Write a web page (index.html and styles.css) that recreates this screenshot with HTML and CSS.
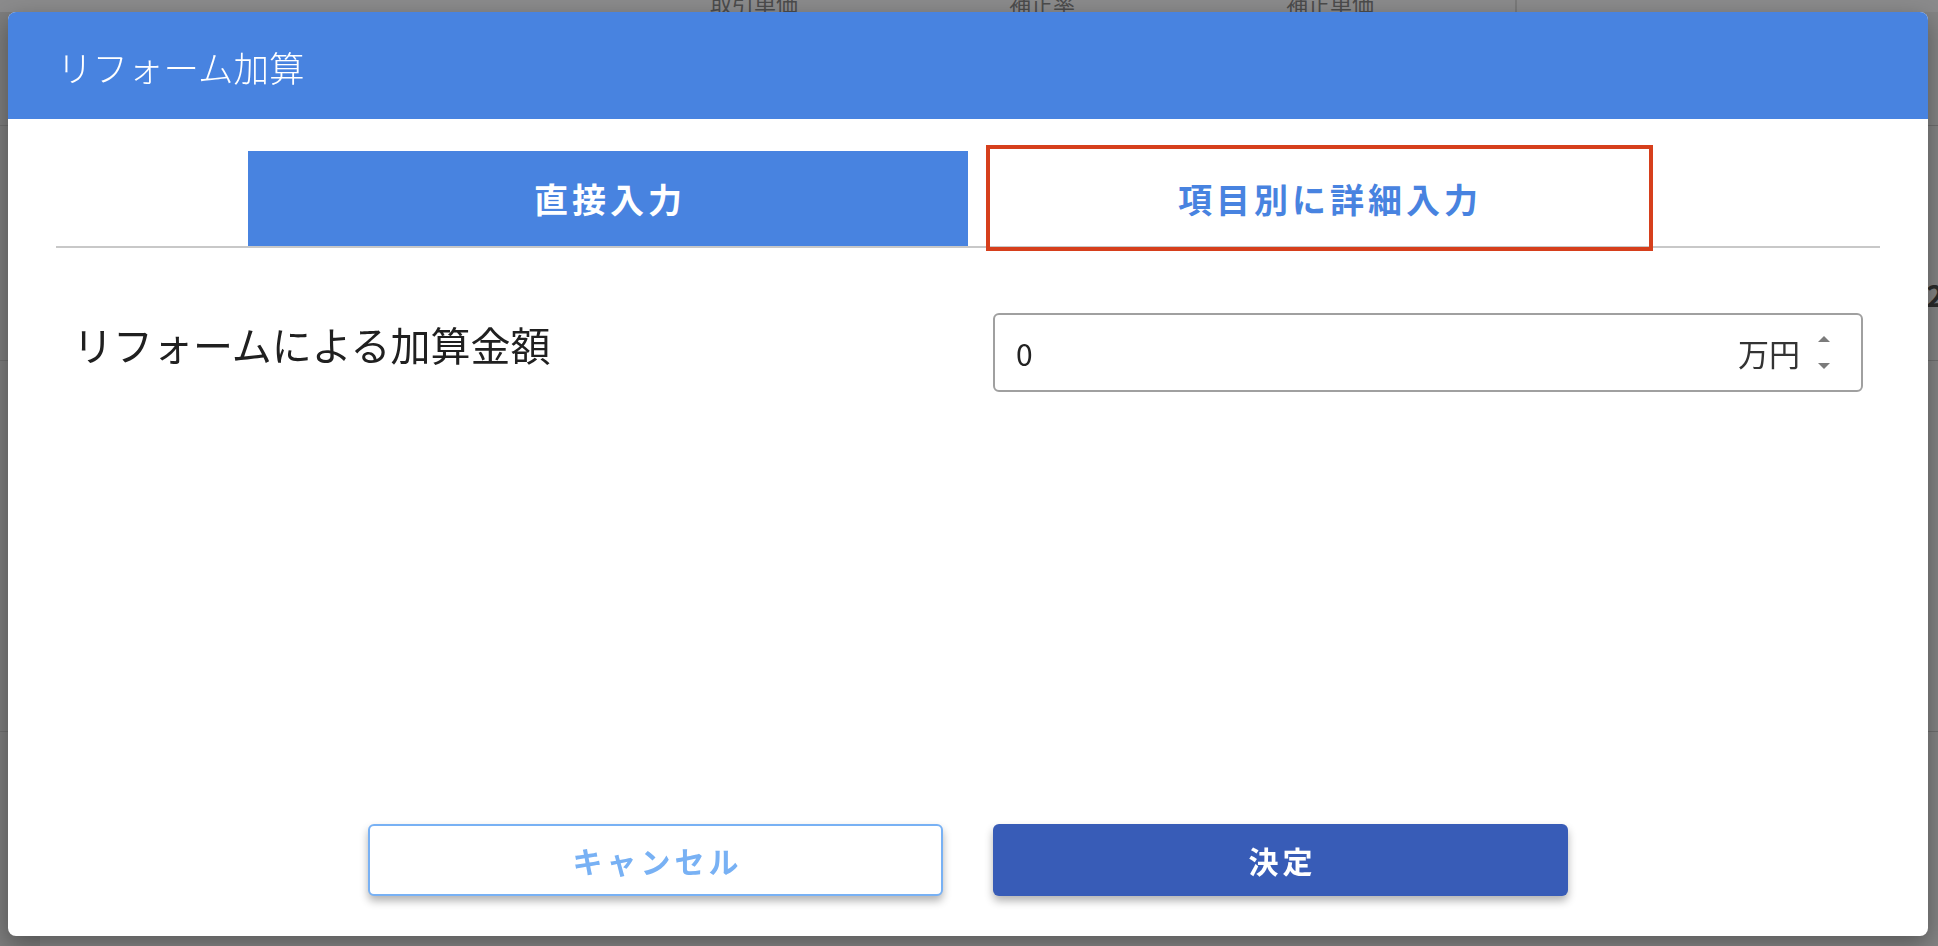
FILE: index.html
```html
<!DOCTYPE html>
<html lang="ja">
<head>
<meta charset="utf-8">
<title>リフォーム加算</title>
<link rel="stylesheet" href="styles.css">
</head>
<body>
<div class="page">
  <div class="bg-head">
    <span class="bg-h">取引単価</span>
    <span class="bg-h">補正率</span>
    <span class="bg-h">補正単価</span>
    <span class="bg-sep"></span>
  </div>
  <div class="bg-row r1"></div>
  <div class="bg-row r2"><span class="bg-num">2</span></div>
  <div class="bg-row r3"></div>
</div>

<div class="dialog">
  <div class="dialog-header">リフォーム加算</div>
  <div class="dialog-body">
    <div class="tabs">
      <div class="tab active">直接入力</div>
      <div class="tab inactive">項目別に詳細入力<span class="annot"></span></div>
    </div>
    <div class="field-row">
      <div class="field-label">リフォームによる加算金額</div>
      <div class="field-input">
        <span class="value">0</span>
        <span class="unit">万円</span>
        <svg class="spinner" width="12" height="33" viewBox="0 0 12 33">
          <path d="M6 0 L12 6 L0 6 Z" fill="#7b7b7b"/>
          <path d="M0 27 L12 27 L6 33 Z" fill="#7b7b7b"/>
        </svg>
      </div>
    </div>
  </div>
  <div class="dialog-footer">
    <button class="btn btn-cancel">キャンセル</button>
    <button class="btn btn-ok">決定</button>
  </div>
</div>
</body>
</html>
```

FILE: styles.css
```css
* { box-sizing: border-box; }

html, body {
  margin: 0;
  padding: 0;
  width: 1938px;
  height: 946px;
  overflow: hidden;
}

body {
  background: #7f7f7f;
  font-family: "Noto Sans CJK JP", "Noto Sans", sans-serif;
}

/* background page (dimmed by overlay) */
.page {
  width: 1938px;
  height: 946px;
  background: linear-gradient(to right, #7d7d7d 0, #7d7d7d 40px, #888 40px, #888 1880px, #848484 1880px);
}

.bg-head {
  height: 12px;
  overflow: hidden;
  display: flex;
  align-items: flex-end;
  padding-left: 610px;
  background: #8b8b8c;
}

.bg-h {
  width: 288px;
  text-align: center;
  font-size: 22px;
  line-height: 22px;
  color: #4c4c4c;
  margin-bottom: -1px;
}

.bg-sep {
  width: 2px;
  height: 12px;
  margin-left: 41px;
  background: #7a7a7a;
}

.bg-row {
  border-bottom: 1px solid #6f6f6f;
}

.r1 { height: 114px; }
.r2 {
  height: 235px;
  display: flex;
  justify-content: flex-end;
  align-items: flex-start;
  padding-top: 146px;
}
.r3 { height: 371px; }

.bg-num {
  font-size: 30px;
  line-height: 44px;
  font-weight: 700;
  color: #2b2b2b;
  margin-right: -6px;
}

/* dialog */
.dialog {
  position: fixed;
  left: 8px;
  top: 12px;
  width: 1920px;
  height: 924px;
  background: #fff;
  border-radius: 8px;
  overflow: hidden;
  display: flex;
  flex-direction: column;
  box-shadow: 0 8px 24px rgba(0, 0, 0, 0.35);
}

.dialog-header {
  height: 107px;
  flex: none;
  background: #4883e0;
  color: #fff;
  display: flex;
  align-items: center;
  padding: 1px 0 0 49px;
  font-size: 35.5px;
  font-weight: 300;
}

.dialog-body {
  flex: 1;
  padding: 32px 48px 0;
}

.tabs {
  display: flex;
  justify-content: center;
  border-bottom: 2px solid #c8c8c8;
}

.tab {
  position: relative;
  width: 720px;
  height: 95px;
  display: flex;
  align-items: center;
  justify-content: center;
  font-size: 34px;
  font-weight: 700;
  letter-spacing: 4px;
  padding-left: 4px;
}

.tab.active {
  background: #4883e0;
  color: #fff;
}

.tab.inactive {
  background: #fff;
  color: #4883e0;
}

.annot {
  position: absolute;
  left: 18px;
  top: -6px;
  width: 667px;
  height: 106px;
  border: 4px solid #d63f1c;
}

.field-row {
  display: flex;
  align-items: center;
  margin-top: 65px;
}

.field-label {
  flex: 1;
  padding-left: 17px;
  padding-bottom: 18px;
  font-size: 40px;
  color: #202020;
}

.field-input {
  width: 870px;
  height: 79px;
  margin-right: 17px;
  border: 2px solid #a0a0a0;
  border-radius: 6px;
  display: flex;
  align-items: center;
  padding: 0 31px 0 21px;
  font-size: 30px;
  color: #222;
}

.value { flex: 1; }

.unit {
  color: #333;
  font-size: 31px;
}

.spinner {
  margin-left: 18px;
  display: block;
}

.dialog-footer {
  flex: none;
  display: flex;
  justify-content: center;
  gap: 50px;
  padding-bottom: 40px;
}

.btn {
  width: 575px;
  height: 72px;
  border-radius: 6px;
  font-family: "Noto Sans CJK JP", "Noto Sans", sans-serif;
  font-size: 30px;
  font-weight: 700;
  letter-spacing: 4px;
  padding: 0 0 0 4px;
  box-shadow: 0 5px 9px rgba(0, 0, 0, 0.3);
  cursor: pointer;
}

.btn-cancel {
  background: #fff;
  border: 2px solid #78b1f4;
  color: #78b1f4;
}

.btn-ok {
  background: #385cb7;
  border: none;
  color: #fff;
}
```
